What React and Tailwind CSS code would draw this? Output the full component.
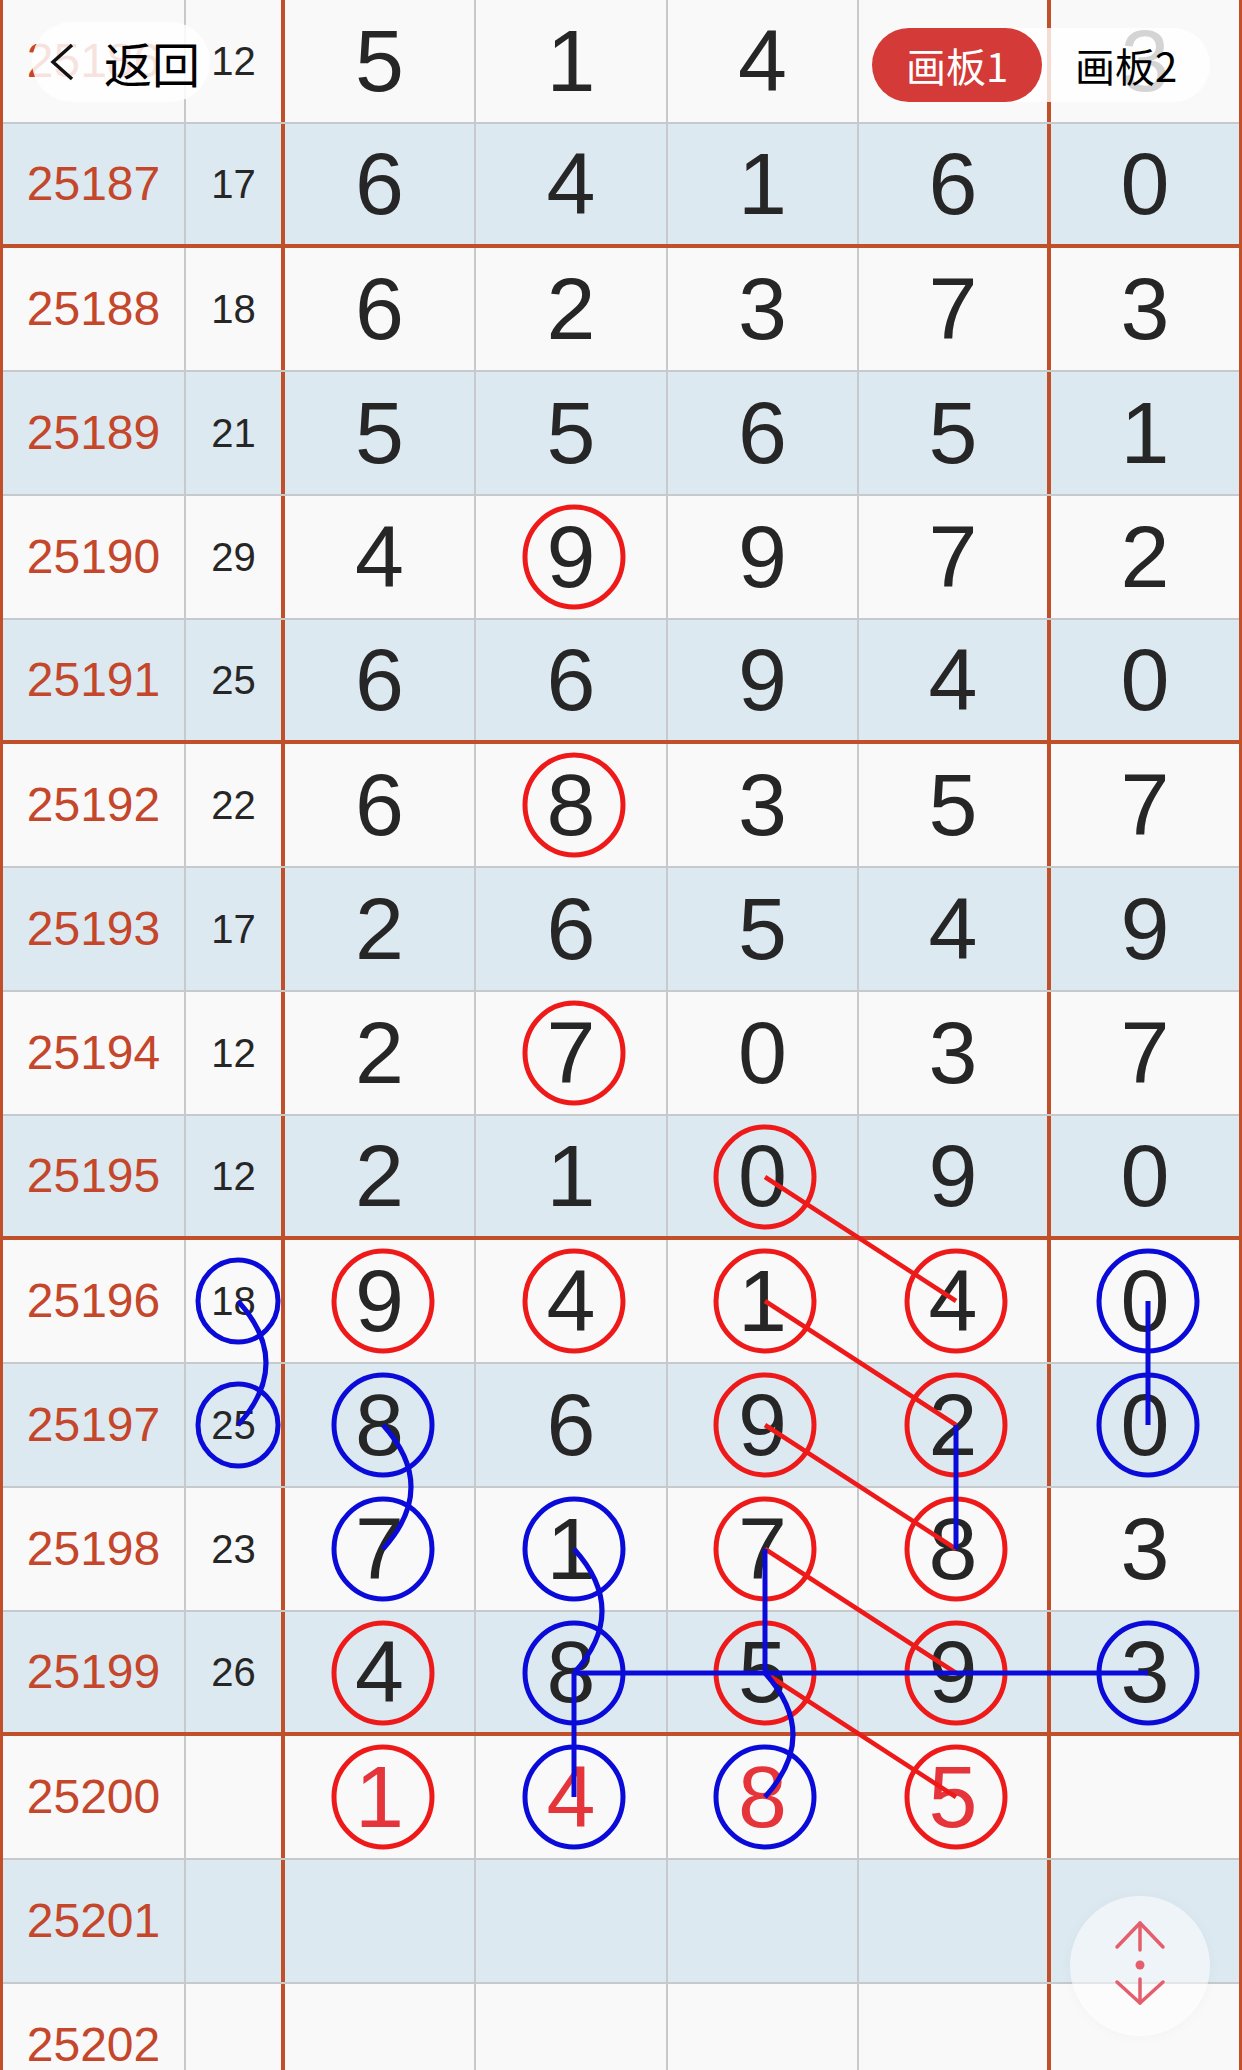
import React from "react";

const ROWS = [
  { no: "25186", sum: "12", d: ["5", "1", "4", "7", "3"] },
  { no: "25187", sum: "17", d: ["6", "4", "1", "6", "0"], end: true },
  { no: "25188", sum: "18", d: ["6", "2", "3", "7", "3"] },
  { no: "25189", sum: "21", d: ["5", "5", "6", "5", "1"] },
  { no: "25190", sum: "29", d: ["4", "9", "9", "7", "2"] },
  { no: "25191", sum: "25", d: ["6", "6", "9", "4", "0"], end: true },
  { no: "25192", sum: "22", d: ["6", "8", "3", "5", "7"] },
  { no: "25193", sum: "17", d: ["2", "6", "5", "4", "9"] },
  { no: "25194", sum: "12", d: ["2", "7", "0", "3", "7"] },
  { no: "25195", sum: "12", d: ["2", "1", "0", "9", "0"], end: true },
  { no: "25196", sum: "18", d: ["9", "4", "1", "4", "0"] },
  { no: "25197", sum: "25", d: ["8", "6", "9", "2", "0"] },
  { no: "25198", sum: "23", d: ["7", "1", "7", "8", "3"] },
  { no: "25199", sum: "26", d: ["4", "8", "5", "9", "3"], end: true },
  { no: "25200", sum: "", d: ["1", "4", "8", "5", ""], next: true },
  { no: "25201", sum: "", d: ["", "", "", "", ""] },
  { no: "25202", sum: "", d: ["", "", "", "", ""] },
];

// centres of the columns, used by the drawing layer
const CX = { s: 235, 0: 380, 1: 571, 2: 762, 3: 953, 4: 1145 };
const cy = (r) => 124 * r + 61;

const RED = "#ee1a1a";
const BLUE = "#0b0bd9";

const redRings = [
  [4, 1], [6, 1], [8, 1], [9, 2],
  [10, 0], [10, 1], [10, 2], [10, 3],
  [11, 2], [11, 3], [12, 2], [12, 3],
  [13, 0], [13, 2], [13, 3], [14, 0], [14, 3],
];
const blueRings = [
  [10, 4], [11, 0], [11, 4], [12, 0], [12, 1],
  [13, 1], [13, 4], [14, 1], [14, 2],
];
const redLines = [
  [9, 2, 10, 3], [10, 2, 11, 3], [11, 2, 12, 3], [12, 2, 13, 3], [13, 2, 14, 3],
];
const blueLines = [
  [10, 4, 11, 4], [11, 3, 12, 3], [12, 2, 13, 2], [13, 1, 13, 4], [13, 1, 14, 1],
];
const blueCurves = [
  [10, "s"], [11, 0], [12, 1], [13, 2],
];

function Marks() {
  return (
    <svg
      className="absolute left-0 top-0 pointer-events-none"
      width="1242"
      height="2108"
      viewBox="0 0 1242 2108"
      fill="none"
    >
      {redRings.map(([r, c]) => (
        <ellipse key={"r" + r + c} cx={CX[c]} cy={cy(r)} rx="49" ry="50" stroke={RED} strokeWidth="5" />
      ))}
      {blueRings.map(([r, c]) => (
        <ellipse key={"b" + r + c} cx={CX[c]} cy={cy(r)} rx="49" ry="50" stroke={BLUE} strokeWidth="5" />
      ))}
      <ellipse cx={CX.s} cy={cy(10)} rx="40" ry="41" stroke={BLUE} strokeWidth="5" />
      <ellipse cx={CX.s} cy={cy(11)} rx="40" ry="41" stroke={BLUE} strokeWidth="5" />
      {redLines.map(([r1, c1, r2, c2]) => (
        <line key={"rl" + r1 + c1} x1={CX[c1]} y1={cy(r1)} x2={CX[c2]} y2={cy(r2)} stroke={RED} strokeWidth="4.5" />
      ))}
      {blueLines.map(([r1, c1, r2, c2]) => (
        <line key={"bl" + r1 + c1 + c2} x1={CX[c1]} y1={cy(r1)} x2={CX[c2]} y2={cy(r2)} stroke={BLUE} strokeWidth="5" />
      ))}
      {blueCurves.map(([r, c]) => (
        <path
          key={"bc" + r + c}
          d={`M${CX[c]} ${cy(r)} Q${CX[c] + 56} ${cy(r) + 62} ${CX[c]} ${cy(r + 1)}`}
          stroke={BLUE}
          strokeWidth="5"
        />
      ))}
    </svg>
  );
}

function Row({ row, index }) {
  const blue = index % 2 === 1;
  return (
    <div
      className={
        "grid grid-cols-[183px_99px_191px_192px_191px_192px_1fr] h-[124px] " +
        (blue ? "bg-[#dde9f1] " : "bg-[#f9f9f9] ") +
        (row.end ? "border-b-4 border-b-[#c1502a]" : "border-b-2 border-b-[#c6cacd]")
      }
    >
      <div className="flex items-center justify-center border-r-2 border-r-[#c6cacd] text-[48px] leading-none text-[#c4462b]">
        {row.no}
      </div>
      <div className="flex items-center justify-center border-r-4 border-r-[#c1502a] text-[40px] leading-none text-[#262626]">
        {row.sum}
      </div>
      {row.d.map((n, i) => (
        <div
          key={i}
          className={
            "flex items-center justify-center text-[88px] leading-none " +
            (row.next ? "text-[#e5343a] " : "text-[#262626] ") +
            (i === 3
              ? "border-r-4 border-r-[#c1502a]"
              : i < 3
              ? "border-r-2 border-r-[#c6cacd]"
              : "")
          }
        >
          {n}
        </div>
      ))}
    </div>
  );
}

export default function App() {
  return (
    <div className="relative w-[1242px] h-[2070px] overflow-hidden bg-[#f9f9f9] font-['Liberation_Sans','Noto_Sans_CJK_SC',sans-serif]">
      <div className="relative border-x-[3px] border-[#c1502a]">
        {ROWS.map((row, i) => (
          <Row key={row.no} row={row} index={i} />
        ))}
        <Marks />
      </div>

      <button className="absolute left-[32px] top-[22px] h-[80px] flex items-center pl-[18px] pr-[10px] rounded-full bg-white/85 text-black">
        <svg width="26" height="40" viewBox="0 0 26 40" fill="none">
          <polyline points="22,3 3,20 22,37" stroke="#111" strokeWidth="3.5" />
        </svg>
        <span className="ml-[28px] text-[48px] leading-none font-['Noto_Sans_CJK_SC',sans-serif]">返回</span>
      </button>

      <div className="absolute left-[872px] top-[28px] flex rounded-full bg-white/80 font-['Noto_Sans_CJK_SC',sans-serif]">
        <button className="w-[170px] h-[74px] rounded-full bg-[#d33a38] text-white text-[40px] leading-none">
          画板1
        </button>
        <button className="w-[168px] h-[74px] rounded-full text-black text-[40px] leading-none">
          画板2
        </button>
      </div>

      <button className="absolute left-[1070px] top-[1896px] w-[140px] h-[140px] rounded-full bg-white/50 shadow-[0_0_14px_rgba(0,0,0,0.03)]">
        <svg width="140" height="140" viewBox="0 0 140 140" fill="none">
          <g stroke="#e45e6d" strokeWidth="3.5" strokeLinecap="round" strokeLinejoin="round">
            <polyline points="47,51 70,27 93,51" />
            <line x1="70" y1="27" x2="70" y2="54" />
            <line x1="70" y1="83" x2="70" y2="107" />
            <polyline points="47,86 70,107 93,86" />
          </g>
          <circle cx="70" cy="69" r="4.5" fill="#e45e6d" />
        </svg>
      </button>
    </div>
  );
}
